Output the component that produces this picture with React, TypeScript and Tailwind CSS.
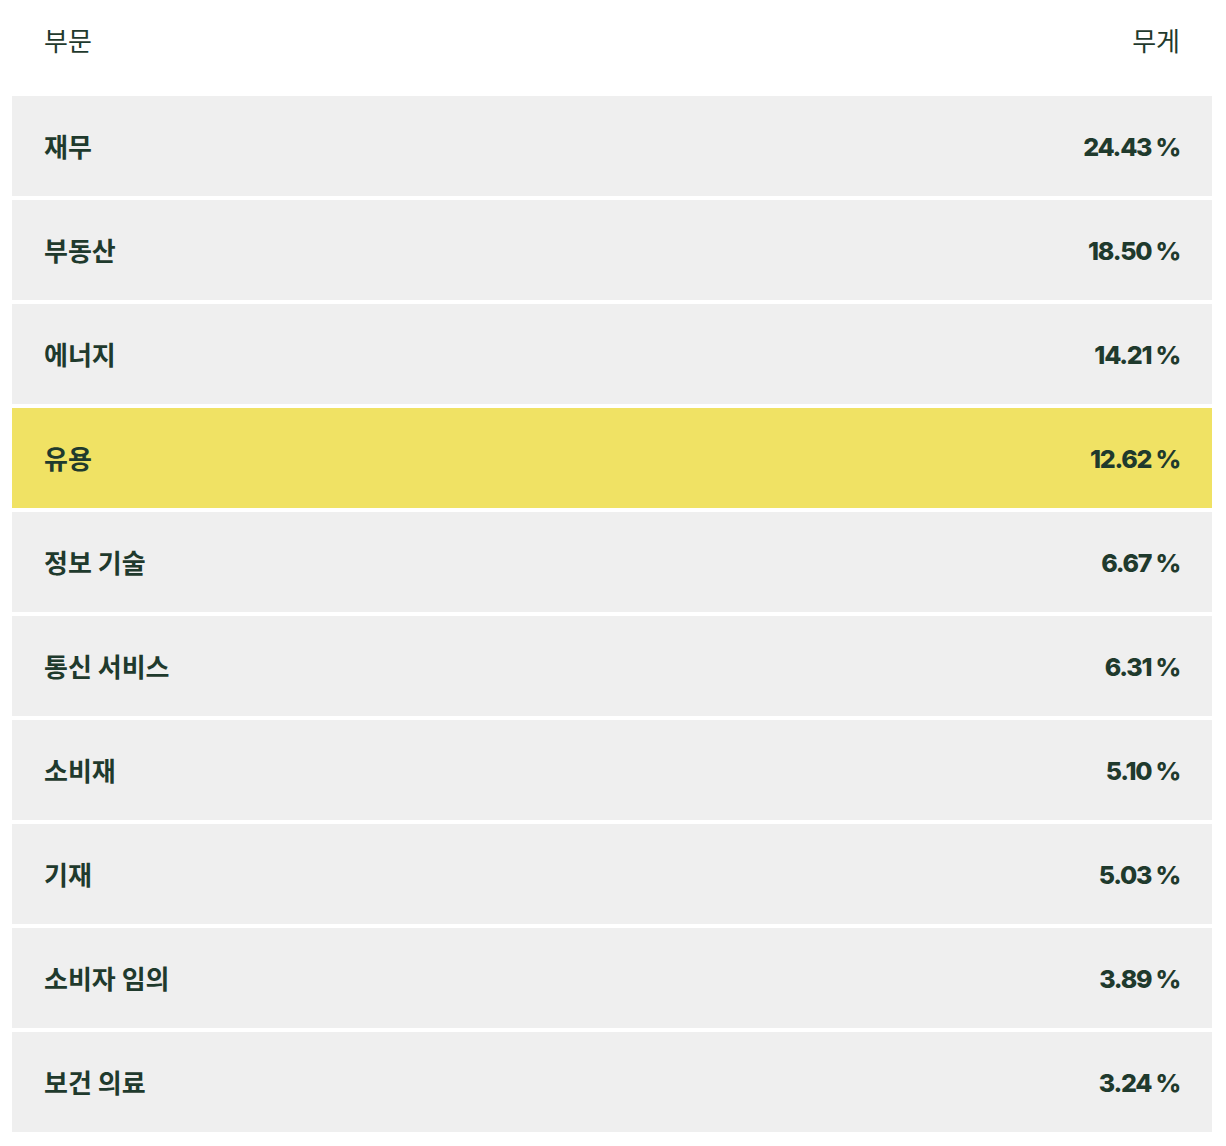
import React from 'react'

const rows = [
  { name: '재무', weight: '24.43 %' },
  { name: '부동산', weight: '18.50 %' },
  { name: '에너지', weight: '14.21 %' },
  { name: '유용', weight: '12.62 %', active: true },
  { name: '정보 기술', weight: '6.67 %' },
  { name: '통신 서비스', weight: '6.31 %' },
  { name: '소비재', weight: '5.10 %' },
  { name: '기재', weight: '5.03 %' },
  { name: '소비자 임의', weight: '3.89 %' },
  { name: '보건 의료', weight: '3.24 %' },
]

const App = () => {
  return (
    <div
      className="w-[1226px] bg-white pl-[12px] pr-[14px] pb-[14px] text-[#1f3a2d]"
      style={{ fontFamily: '"Noto Sans CJK KR", "Noto Sans", sans-serif' }}
    >
      {/* 헤더 */}
      <div className="flex h-[78px] items-center justify-between px-[32px] text-[26px] font-normal">
        <span>부문</span>
        <span>무게</span>
      </div>

      {/* 목록 */}
      <div className="mt-[18px] flex flex-col gap-[4px]">
        {rows.map((row) => (
          <div
            key={row.name}
            className={`flex h-[100px] items-center justify-between px-[32px] ${row.active ? 'bg-[#f0e264]' : 'bg-[#efefef]'}`}
          >
            <span className="-translate-y-[1px] text-[26px] font-bold">{row.name}</span>
            <span className="translate-y-[2px] font-['Inter'] text-[25px] font-extrabold tracking-[-0.05em]">{row.weight}</span>
          </div>
        ))}
      </div>
    </div>
  )
}

export default App
